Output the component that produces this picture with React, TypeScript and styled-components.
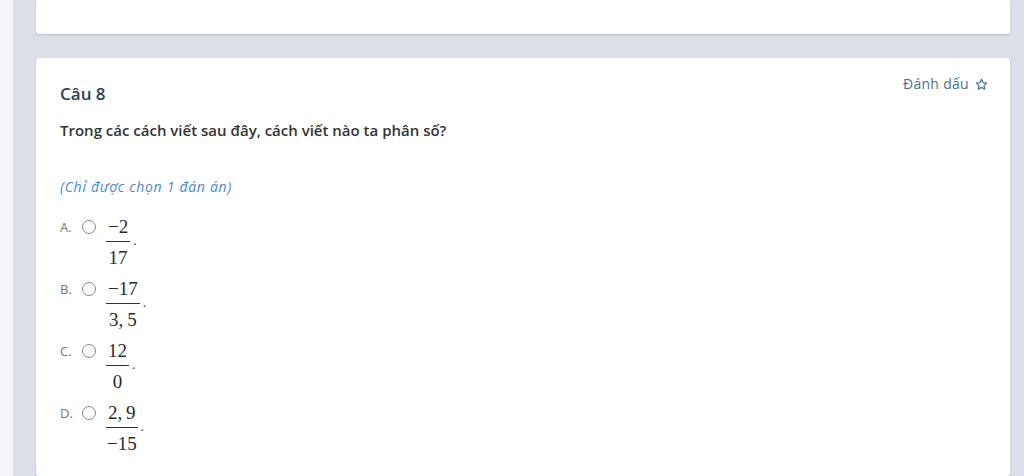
import React from "react";
import styled, { createGlobalStyle } from "styled-components";

const Global = createGlobalStyle`
  html, body { margin: 0; padding: 0; }
  body { background: #dcdee8; font-family: "Open Sans", "Noto Sans", sans-serif; overflow: hidden; }
`;

const Page = styled.div`
  display: flex;
  height: 476px;
`;

const SideStrip = styled.div`
  width: 13px;
  flex: none;
  background: #f4f4f5;
`;

const Main = styled.div`
  flex: 1;
  display: flex;
  flex-direction: column;
  gap: 24px;
  padding: 0 14px 0 23px;
`;

const Card = styled.div<{ $h?: number }>`
  background: #fff;
  border-radius: 3px;
  box-shadow: 0 1px 2px rgba(120, 130, 150, 0.35);
  ${(p) => (p.$h ? `height: ${p.$h}px;` : "flex: 1;")}
`;

const TopCard = styled(Card)`
  border-top-left-radius: 0;
  border-top-right-radius: 0;
`;

const Body = styled.div`
  padding: 21px 22px 0 24px;
  display: flex;
  flex-direction: column;
`;

const Header = styled.div`
  display: flex;
  justify-content: space-between;
  align-items: flex-start;
`;

const Title = styled.div`
  font-size: 17px;
  line-height: 23px;
  font-weight: 600;
  color: #2f3f55;
  margin-top: 3px;
`;

const Mark = styled.div`
  font-size: 14px;
  line-height: 18px;
  color: #4e6f92;
  display: flex;
  align-items: center;
  gap: 6px;
  margin-top: -4px;
  letter-spacing: 0.3px;
`;

const Question = styled.div`
  margin-top: 15px;
  font-size: 15px;
  line-height: 20px;
  font-weight: 600;
  color: #333;
`;

const Hint = styled.div`
  margin-top: 36px;
  font-size: 14px;
  line-height: 22px;
  letter-spacing: 0.7px;
  font-style: italic;
  color: #4a8ad0;
`;

const Options = styled.div`
  margin-top: 21px;
  display: flex;
  flex-direction: column;
  gap: 10px;
`;

const Option = styled.div`
  display: flex;
  align-items: flex-start;
  height: 52px;
`;

const Letter = styled.span`
  font-size: 13px;
  line-height: 16px;
  color: #777;
  width: 22px;
`;

const Radio = styled.span`
  width: 14px;
  height: 14px;
  border: 1px solid #888;
  border-radius: 50%;
  margin-top: 1px;
  margin-right: 10px;
  box-sizing: border-box;
`;

const Frac = styled.span`
  display: inline-flex;
  flex-direction: column;
  align-items: center;
  font-family: "Liberation Serif", "Times New Roman", serif;
  font-size: 19px;
  color: #2a2a2a;
  line-height: 19px;
  margin-top: -2px;
`;

const Num = styled.span`
  padding: 0 2px 5px;
  border-bottom: 1.5px solid #333;
  min-width: 100%;
  text-align: center;
  box-sizing: border-box;
`;

const Den = styled.span`
  padding-top: 6px;
`;

const Dot = styled.span`
  font-family: "Liberation Serif", serif;
  font-size: 14px;
  color: #555;
  margin-top: 14px;
  margin-left: 3px;
`;

const Star = () => (
  <svg width="13" height="13" viewBox="0 0 24 24" fill="none" stroke="#4e6f92" strokeWidth="2.2" strokeLinejoin="round">
    <path d="M12 2.5l2.9 6.1 6.6.8-4.9 4.6 1.3 6.6L12 17.3l-5.9 3.3 1.3-6.6-4.9-4.6 6.6-.8z" />
  </svg>
);

const options = [
  { l: "A.", n: "\u22122", d: "17" },
  { l: "B.", n: "\u221217", d: "3,\u20095" },
  { l: "C.", n: "12", d: "0" },
  { l: "D.", n: "2,\u20099", d: "\u221215" },
];

export default function App() {
  return (
    <>
      <Global />
      <Page>
        <SideStrip />
        <Main>
          <TopCard $h={34} />
          <Card>
            <Body>
              <Header>
                <Title>Câu 8</Title>
                <Mark>
                  Đánh dấu <Star />
                </Mark>
              </Header>
              <Question>Trong các cách viết sau đây, cách viết nào ta phân số?</Question>
              <Hint>(Chỉ được chọn 1 đán án)</Hint>
              <Options>
                {options.map((o) => (
                  <Option key={o.l}>
                    <Letter>{o.l}</Letter>
                    <Radio />
                    <Frac>
                      <Num>{o.n}</Num>
                      <Den>{o.d}</Den>
                    </Frac>
                    <Dot>.</Dot>
                  </Option>
                ))}
              </Options>
            </Body>
          </Card>
        </Main>
      </Page>
    </>
  );
}
